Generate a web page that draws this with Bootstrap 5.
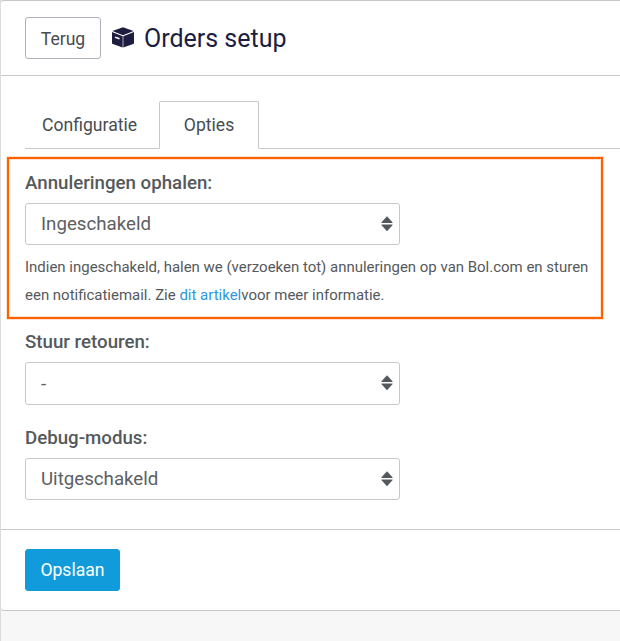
<!DOCTYPE html>
<html lang="nl">
<head>
<meta charset="utf-8">
<meta name="viewport" content="width=device-width, initial-scale=1">
<title>Orders setup</title>
<link href="https://cdn.jsdelivr.net/npm/bootstrap@5.3.0/dist/css/bootstrap.min.css" rel="stylesheet">
<style>
body{font-family:Roboto,"Liberation Sans",sans-serif;font-size:18px;color:#55595c;background:#f7f7f7;overflow:hidden}
.page{min-height:641px;border-left:1px solid #dcdcdc}
.panel{--bs-card-border-color:#c6c7c9;--bs-card-border-radius:3px;--bs-card-inner-border-radius:2px;--bs-card-color:#55595c;margin-left:-1px;border-right:0;border-left-color:#dcdcdc;height:611px;border-radius:4px 0 0 4px}
.panel-head{height:75px;padding:0 24px;border-bottom:1px solid #c6c7c9}
.panel-foot{height:81px;padding:0 24px;border-top:1px solid #c6c7c9}
.btn{--bs-btn-font-size:17.6px;--bs-btn-border-radius:3px;--bs-btn-padding-x:0;--bs-btn-padding-y:0;height:42px;line-height:41px;white-space:nowrap}
.btn-back{--bs-btn-color:#484c50;--bs-btn-border-color:#b0b0bd;--bs-btn-bg:#fff;width:76px;line-height:42px}
.btn-save{--bs-btn-color:#fff;--bs-btn-bg:#129bdb;--bs-btn-border-color:#129bdb;--bs-btn-hover-bg:#0f8ac4;--bs-btn-hover-color:#fff;width:95px}
.title{font-size:25px;font-weight:400;line-height:40px;color:#1d1d3f;padding-top:2px;padding-left:1px}
.cube{margin-left:10px}
.tabs{--bs-nav-tabs-border-color:#c6c7c9;--bs-nav-tabs-border-radius:2px;--bs-nav-tabs-link-active-color:#484c50;--bs-nav-tabs-link-active-border-color:#c6c7c9 #c6c7c9 #fff;--bs-nav-link-color:#484c50;margin:25px 0 0 24px;height:48px;font-size:17.6px}
.tabs .nav-link{height:48px;line-height:46px;padding:0;width:100px;text-align:center}
.tabs .first-tab{width:134px;padding:0 0 0 16px;text-align:left}
.highlight{margin:8px 17px 0 6px;height:162px;border:2px solid #ff6000;box-shadow:0 0 0 1px #ffe3d1,inset 0 0 0 1px #ffe3d1;padding:10px 0 0 16px}
.form-label{font-size:18.7px;font-weight:500;line-height:28px;margin-bottom:6px;display:block}
.field{padding-left:24px}
.field-returns{margin-top:9px}
.field-debug{margin-top:19px}
.picker{position:relative;width:375px}
.picker .form-select{height:42px;font-size:18.7px;line-height:38px;padding:0 15px;color:#5c6063;border-color:#c6c7c9;border-radius:3px;background-image:none}
.picker svg{position:absolute;right:7px;top:13px;pointer-events:none}
.picker.tall .form-select{height:43px}
.help{font-size:14.98px;line-height:28px;margin-top:8px;white-space:nowrap}
.help a{color:#2a98dc}
</style>
</head>
<body>
<div class="page">
<main class="card panel">
  <header class="panel-head d-flex align-items-center">
    <button class="btn btn-back" type="button">Terug</button>
    <svg class="cube" width="24" height="22" viewBox="0 0 24 22" aria-hidden="true">
      <path fill="#1d1d3f" d="M12 .3 22.6 4.1 12 8.3 1.4 4.1Z"/>
      <path fill="#1d1d3f" d="M1 5 11.7 9.2V20.6L1.8 17.1Q1 16.8 1 16Z"/>
      <path fill="#1d1d3f" d="M23 5 12.3 9.2V20.6L22.2 17.1Q23 16.8 23 16Z"/>
      <path stroke="#fff" stroke-width="1.5" d="M4 10.1 8.5 11.8"/>
    </svg>
    <h1 class="title mb-0 ms-2">Orders setup</h1>
  </header>
  <section class="flex-grow-1">
    <ul class="nav nav-tabs tabs">
      <li class="nav-item"><a class="nav-link first-tab" href="#">Configuratie</a></li>
      <li class="nav-item"><a class="nav-link active" href="#" aria-current="page">Opties</a></li>
    </ul>
    <div class="highlight">
      <label class="form-label" for="cancel">Annuleringen ophalen:</label>
      <div class="picker">
        <select class="form-select" id="cancel"><option>Ingeschakeld</option></select>
        <svg width="12" height="16" viewBox="0 0 12 16"><path fill="#55595c" d="M6 .3 11.5 6.2V6.9H.5V6.2ZM6 15.2.5 9.3V8.6H11.5V9.3Z"/></svg>
      </div>
      <p class="help mb-0">Indien ingeschakeld, halen we (verzoeken tot) annuleringen op van Bol.com en sturen<br>een notificatiemail. Zie <a class="text-decoration-none" href="#">dit artikel</a>voor meer informatie.</p>
    </div>
    <div class="field field-returns">
      <label class="form-label" for="returns">Stuur retouren:</label>
      <div class="picker tall">
        <select class="form-select" id="returns"><option>-</option></select>
        <svg width="12" height="16" viewBox="0 0 12 16"><path fill="#55595c" d="M6 .3 11.5 6.2V6.9H.5V6.2ZM6 15.2.5 9.3V8.6H11.5V9.3Z"/></svg>
      </div>
    </div>
    <div class="field field-debug">
      <label class="form-label" for="debug">Debug-modus:</label>
      <div class="picker">
        <select class="form-select" id="debug"><option>Uitgeschakeld</option></select>
        <svg width="12" height="16" viewBox="0 0 12 16"><path fill="#55595c" d="M6 .3 11.5 6.2V6.9H.5V6.2ZM6 15.2.5 9.3V8.6H11.5V9.3Z"/></svg>
      </div>
    </div>
  </section>
  <footer class="panel-foot d-flex align-items-center">
    <button class="btn btn-save" type="submit">Opslaan</button>
  </footer>
</main>
</div>
<script src="https://cdn.jsdelivr.net/npm/bootstrap@5.3.0/dist/js/bootstrap.bundle.min.js"></script>
</body>
</html>
